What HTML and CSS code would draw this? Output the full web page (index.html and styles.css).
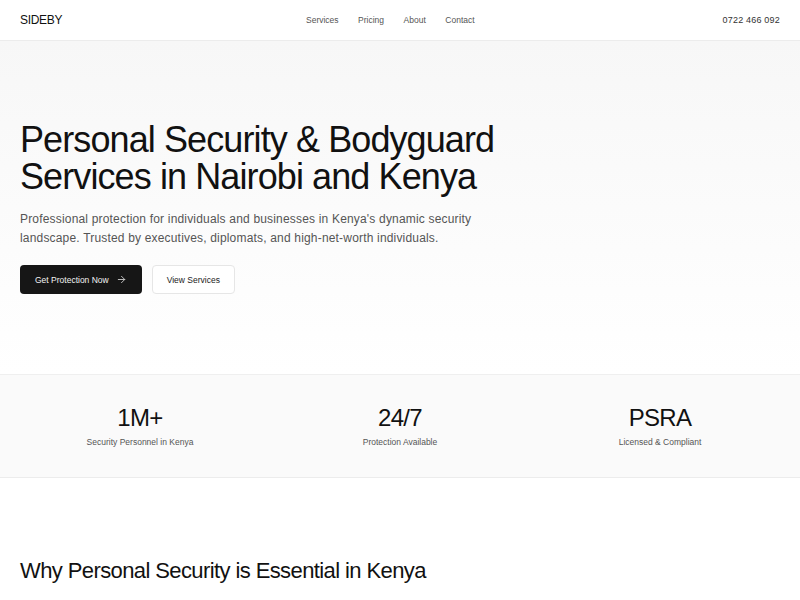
FILE: index.html
```html
<!DOCTYPE html>
<html lang="en">
<head>
<meta charset="utf-8">
<title>SIDEBY</title>
<link rel="stylesheet" href="styles.css">
</head>
<body>
<header class="header">
  <div class="logo">SIDEBY</div>
  <nav class="nav">
    <a href="#">Services</a>
    <a href="#">Pricing</a>
    <a href="#">About</a>
    <a href="#">Contact</a>
  </nav>
  <div class="phone">0722 466 092</div>
</header>
<section class="hero">
  <h1 class="hero-title">Personal Security &amp; Bodyguard<br>Services in Nairobi and Kenya</h1>
  <p class="hero-text">Professional protection for individuals and businesses in Kenya's dynamic security landscape. Trusted by executives, diplomats, and high-net-worth individuals.</p>
  <div class="actions">
    <a class="btn btn-dark" href="#">Get Protection Now
      <svg class="arrow" width="11" height="11" viewBox="0 0 24 24" fill="none" stroke="currentColor" stroke-width="2" stroke-linecap="round" stroke-linejoin="round"><path d="M5 12h14"/><path d="M12 5l7 7-7 7"/></svg>
    </a>
    <a class="btn btn-light" href="#">View Services</a>
  </div>
</section>
<section class="stats">
  <div class="stat"><div class="stat-num">1M+</div><div class="stat-label">Security Personnel in Kenya</div></div>
  <div class="stat"><div class="stat-num">24/7</div><div class="stat-label">Protection Available</div></div>
  <div class="stat"><div class="stat-num">PSRA</div><div class="stat-label">Licensed &amp; Compliant</div></div>
</section>
<section class="why">
  <h2 class="why-title">Why Personal Security is Essential in Kenya</h2>
</section>
</body>
</html>
```
FILE: styles.css
```css
* { box-sizing: border-box; }
html, body { margin: 0; padding: 0; }
body {
  font-family: "Liberation Sans", Arial, sans-serif;
  color: #111;
  background: #fff;
}
a { text-decoration: none; color: inherit; }
.header {
  height: 41px;
  display: flex;
  align-items: center;
  justify-content: space-between;
  padding: 0 20px;
  border-bottom: 1px solid #ececec;
  background: #fff;
  position: relative;
}
.logo { font-size: 12px; letter-spacing: -0.3px; color: #111; }
.nav {
  position: absolute;
  left: 306px;
  display: flex;
  gap: 19.5px;
  font-size: 8.5px;
  color: #555;
}
.phone { font-size: 9px; color: #333; letter-spacing: 0.2px; }
.hero {
  height: 333px;
  padding: 80px 20px 0;
  background: linear-gradient(180deg, #f7f7f7 0%, #ffffff 100%);
}
.hero-title {
  margin: 0;
  font-weight: 400;
  font-size: 36px;
  line-height: 37px;
  letter-spacing: -0.9px;
  color: #111;
}
.hero-text {
  margin: 15px 0 0;
  font-size: 12px;
  line-height: 19px;
  letter-spacing: 0.18px;
  color: #555;
  max-width: 490px;
}
.actions { display: flex; gap: 10px; margin-top: 17px; }
.btn {
  display: inline-flex;
  align-items: center;
  gap: 7px;
  height: 29px;
  padding: 0 15px;
  border-radius: 4px;
  font-size: 8.5px;
  white-space: nowrap;
}
.btn-dark { background: #161616; color: #f2f2f2; }
.btn-light { background: #fff; color: #222; border: 1px solid #e6e6e6; padding: 0 14px; }
.arrow { color: #ccc; }
.stats {
  display: grid;
  grid-template-columns: repeat(3, 1fr);
  gap: 20px;
  padding: 0 20px;
  height: 104px;
  align-content: center;
  background: #fafafa;
  border-top: 1px solid #efefef;
  border-bottom: 1px solid #ececec;
}
.stat { text-align: center; }
.stat-num { font-size: 24px; line-height: 26px; letter-spacing: -0.7px; color: #111; }
.stat-label { margin-top: 6px; font-size: 8.5px; color: #555; letter-spacing: 0; }
.why { padding: 80px 20px 0; }
.why-title {
  margin: 0;
  font-weight: 400;
  font-size: 22px;
  letter-spacing: -0.6px;
  color: #111;
}
```
